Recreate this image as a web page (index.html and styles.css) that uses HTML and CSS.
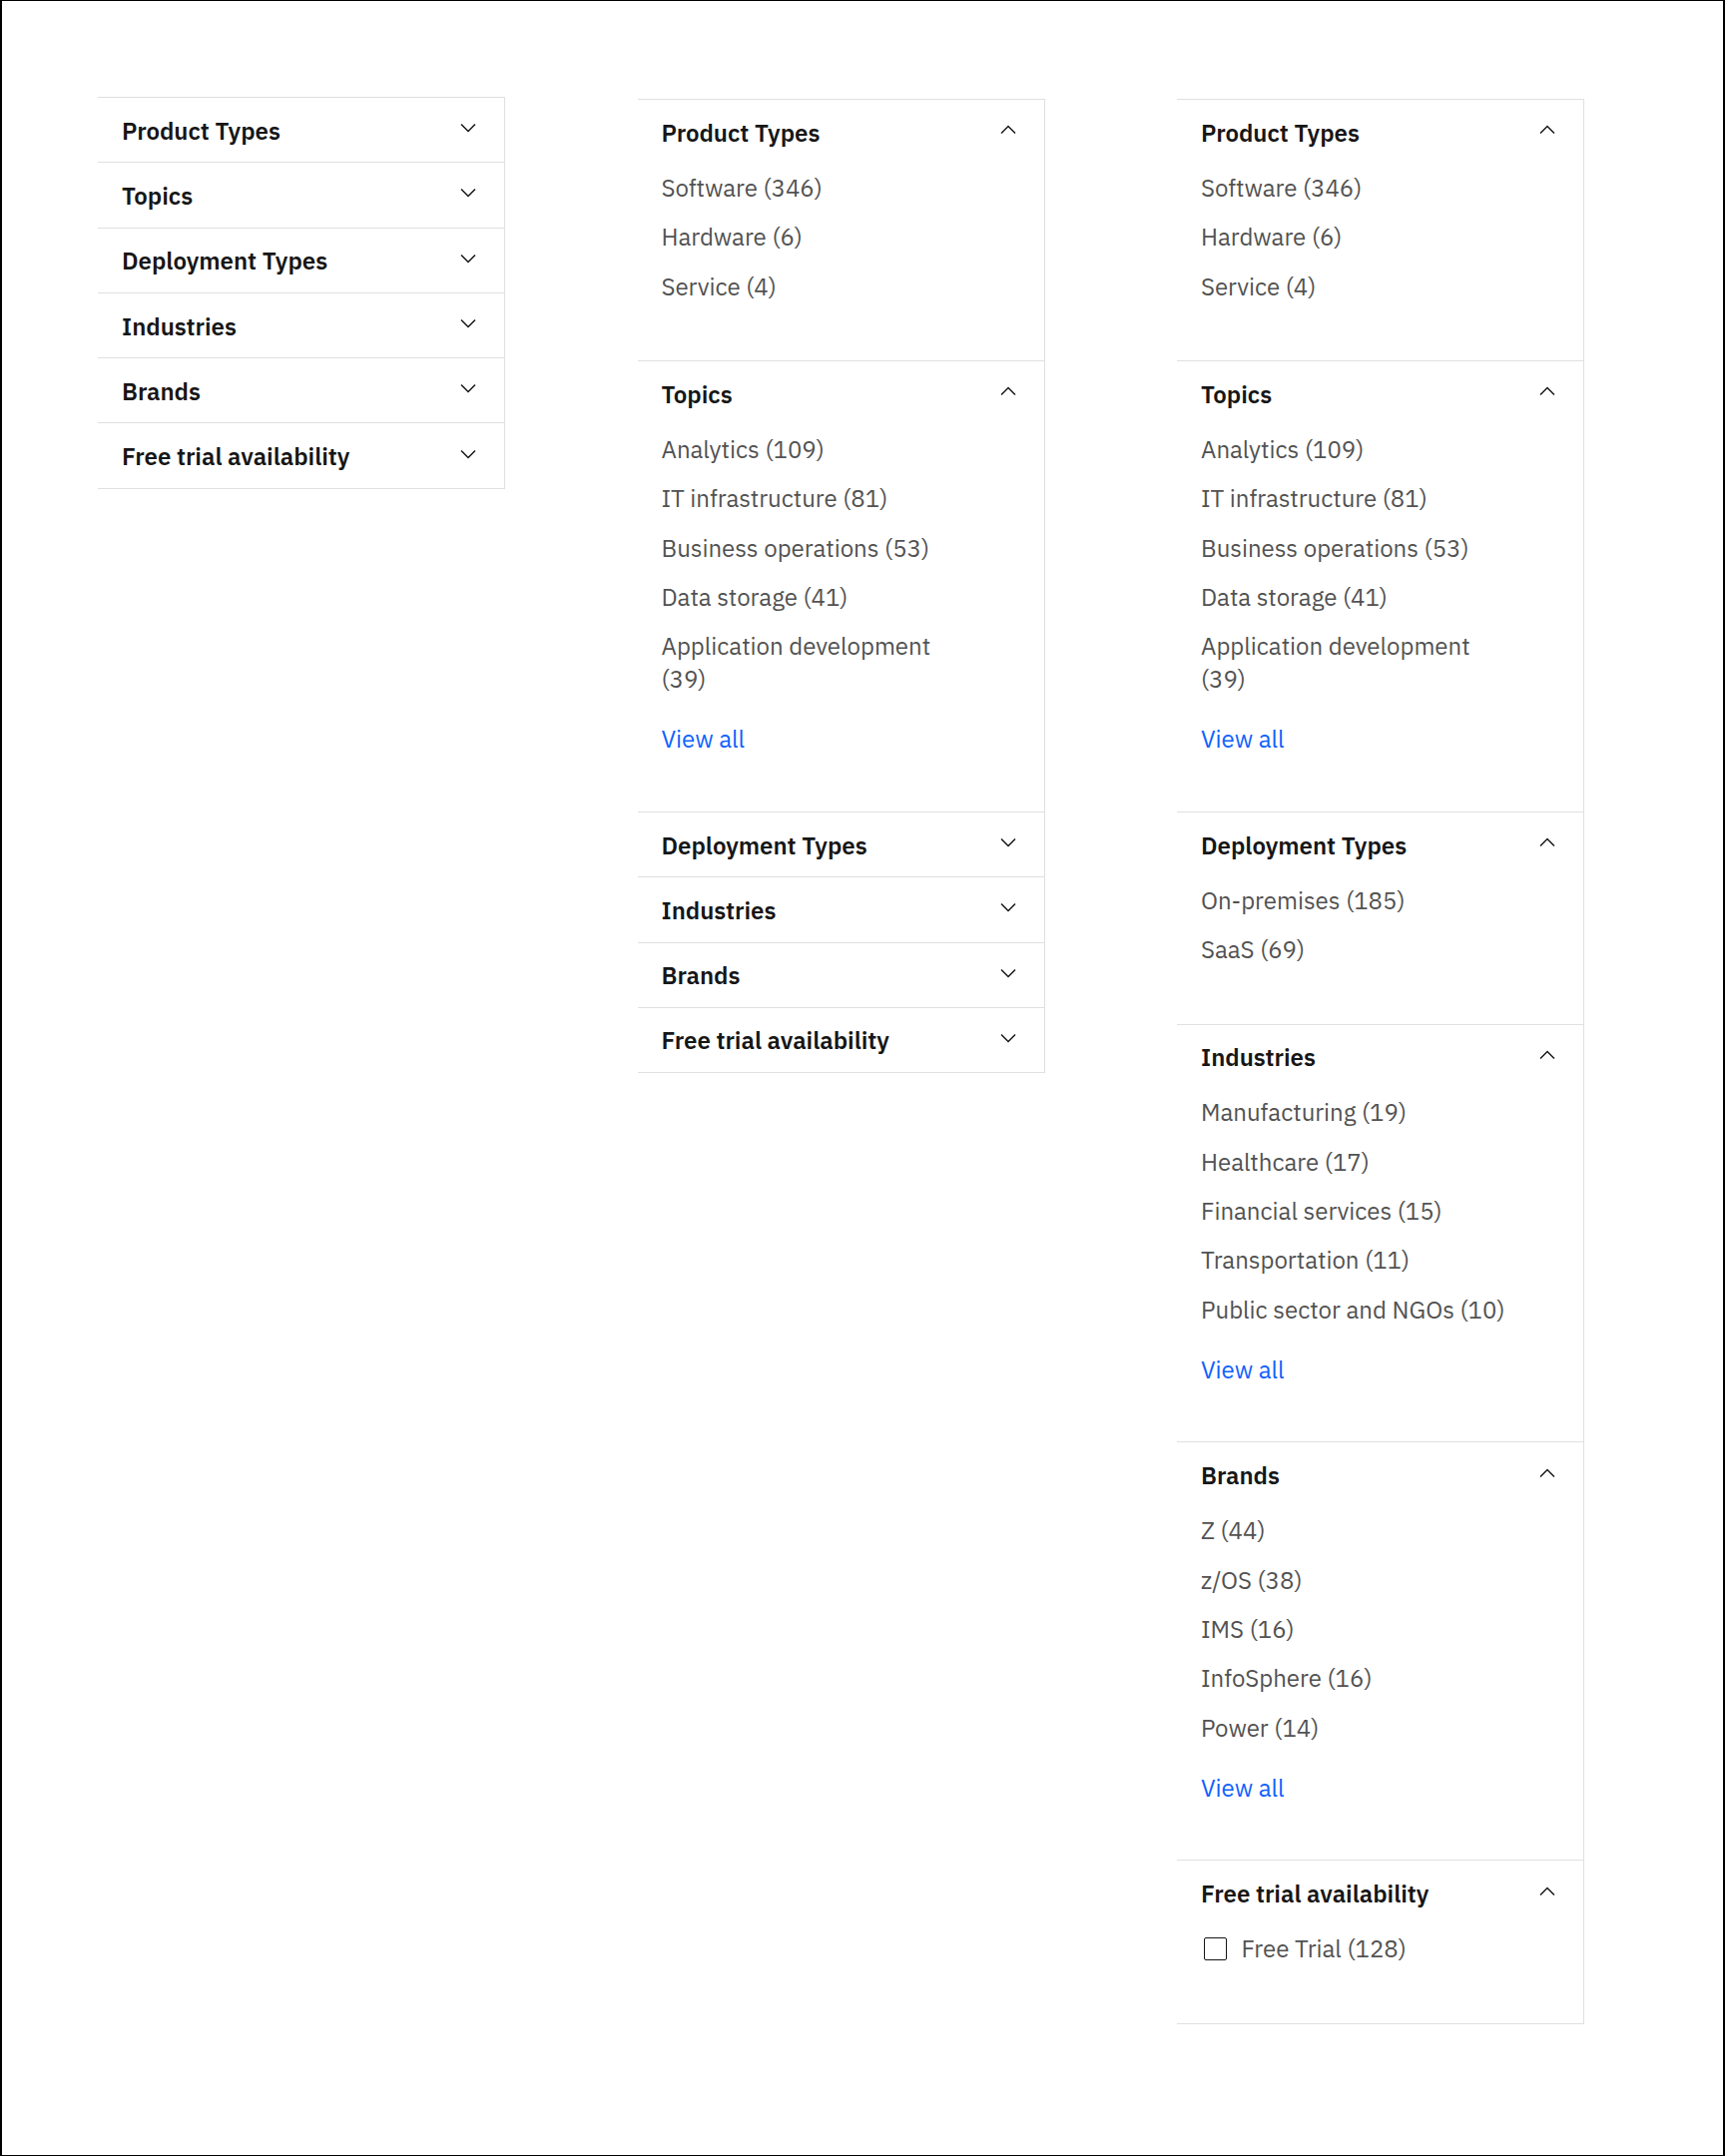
FILE: index.html
```html
<!DOCTYPE html>
<html lang="en">
<head>
<meta charset="utf-8">
<title>Filters</title>
<link rel="stylesheet" href="styles.css">
</head>
<body>
<div class="page">
  <div class="columns">

    <!-- Column 1: all collapsed -->
    <div class="accordion accordion--raised">
      <div class="acc-item">
        <button class="acc-heading"><span class="acc-title">Product Types</span><svg class="chev" viewBox="0 0 16 16"><path d="M8 11L3 6 3.7 5.3 8 9.6 12.3 5.3 13 6z"/></svg></button>
      </div>
      <div class="acc-item">
        <button class="acc-heading"><span class="acc-title">Topics</span><svg class="chev" viewBox="0 0 16 16"><path d="M8 11L3 6 3.7 5.3 8 9.6 12.3 5.3 13 6z"/></svg></button>
      </div>
      <div class="acc-item">
        <button class="acc-heading"><span class="acc-title">Deployment Types</span><svg class="chev" viewBox="0 0 16 16"><path d="M8 11L3 6 3.7 5.3 8 9.6 12.3 5.3 13 6z"/></svg></button>
      </div>
      <div class="acc-item">
        <button class="acc-heading"><span class="acc-title">Industries</span><svg class="chev" viewBox="0 0 16 16"><path d="M8 11L3 6 3.7 5.3 8 9.6 12.3 5.3 13 6z"/></svg></button>
      </div>
      <div class="acc-item">
        <button class="acc-heading"><span class="acc-title">Brands</span><svg class="chev" viewBox="0 0 16 16"><path d="M8 11L3 6 3.7 5.3 8 9.6 12.3 5.3 13 6z"/></svg></button>
      </div>
      <div class="acc-item">
        <button class="acc-heading"><span class="acc-title">Free trial availability</span><svg class="chev" viewBox="0 0 16 16"><path d="M8 11L3 6 3.7 5.3 8 9.6 12.3 5.3 13 6z"/></svg></button>
      </div>
    </div>

    <!-- Column 2: first two expanded -->
    <div class="accordion">
      <div class="acc-item">
        <button class="acc-heading"><span class="acc-title">Product Types</span><svg class="chev" viewBox="0 0 16 16"><path d="M8 5L13 10 12.3 10.7 8 6.4 3.7 10.7 3 10z"/></svg></button>
        <div class="acc-content">
          <ul class="opt-list">
            <li class="opt">Software (346)</li>
            <li class="opt">Hardware (6)</li>
            <li class="opt">Service (4)</li>
          </ul>
        </div>
      </div>
      <div class="acc-item">
        <button class="acc-heading"><span class="acc-title">Topics</span><svg class="chev" viewBox="0 0 16 16"><path d="M8 5L13 10 12.3 10.7 8 6.4 3.7 10.7 3 10z"/></svg></button>
        <div class="acc-content">
          <ul class="opt-list">
            <li class="opt">Analytics (109)</li>
            <li class="opt">IT infrastructure (81)</li>
            <li class="opt">Business operations (53)</li>
            <li class="opt">Data storage (41)</li>
            <li class="opt">Application development (39)</li>
          </ul>
          <a class="view-all" href="#">View all</a>
        </div>
      </div>
      <div class="acc-item">
        <button class="acc-heading"><span class="acc-title">Deployment Types</span><svg class="chev" viewBox="0 0 16 16"><path d="M8 11L3 6 3.7 5.3 8 9.6 12.3 5.3 13 6z"/></svg></button>
      </div>
      <div class="acc-item">
        <button class="acc-heading"><span class="acc-title">Industries</span><svg class="chev" viewBox="0 0 16 16"><path d="M8 11L3 6 3.7 5.3 8 9.6 12.3 5.3 13 6z"/></svg></button>
      </div>
      <div class="acc-item">
        <button class="acc-heading"><span class="acc-title">Brands</span><svg class="chev" viewBox="0 0 16 16"><path d="M8 11L3 6 3.7 5.3 8 9.6 12.3 5.3 13 6z"/></svg></button>
      </div>
      <div class="acc-item">
        <button class="acc-heading"><span class="acc-title">Free trial availability</span><svg class="chev" viewBox="0 0 16 16"><path d="M8 11L3 6 3.7 5.3 8 9.6 12.3 5.3 13 6z"/></svg></button>
      </div>
    </div>

    <!-- Column 3: all expanded -->
    <div class="accordion">
      <div class="acc-item">
        <button class="acc-heading"><span class="acc-title">Product Types</span><svg class="chev" viewBox="0 0 16 16"><path d="M8 5L13 10 12.3 10.7 8 6.4 3.7 10.7 3 10z"/></svg></button>
        <div class="acc-content">
          <ul class="opt-list">
            <li class="opt">Software (346)</li>
            <li class="opt">Hardware (6)</li>
            <li class="opt">Service (4)</li>
          </ul>
        </div>
      </div>
      <div class="acc-item">
        <button class="acc-heading"><span class="acc-title">Topics</span><svg class="chev" viewBox="0 0 16 16"><path d="M8 5L13 10 12.3 10.7 8 6.4 3.7 10.7 3 10z"/></svg></button>
        <div class="acc-content">
          <ul class="opt-list">
            <li class="opt">Analytics (109)</li>
            <li class="opt">IT infrastructure (81)</li>
            <li class="opt">Business operations (53)</li>
            <li class="opt">Data storage (41)</li>
            <li class="opt">Application development (39)</li>
          </ul>
          <a class="view-all" href="#">View all</a>
        </div>
      </div>
      <div class="acc-item">
        <button class="acc-heading"><span class="acc-title">Deployment Types</span><svg class="chev" viewBox="0 0 16 16"><path d="M8 5L13 10 12.3 10.7 8 6.4 3.7 10.7 3 10z"/></svg></button>
        <div class="acc-content">
          <ul class="opt-list">
            <li class="opt">On-premises (185)</li>
            <li class="opt">SaaS (69)</li>
          </ul>
        </div>
      </div>
      <div class="acc-item">
        <button class="acc-heading"><span class="acc-title">Industries</span><svg class="chev" viewBox="0 0 16 16"><path d="M8 5L13 10 12.3 10.7 8 6.4 3.7 10.7 3 10z"/></svg></button>
        <div class="acc-content">
          <ul class="opt-list">
            <li class="opt">Manufacturing (19)</li>
            <li class="opt">Healthcare (17)</li>
            <li class="opt">Financial services (15)</li>
            <li class="opt">Transportation (11)</li>
            <li class="opt">Public sector and NGOs (10)</li>
          </ul>
          <a class="view-all" href="#">View all</a>
        </div>
      </div>
      <div class="acc-item">
        <button class="acc-heading"><span class="acc-title">Brands</span><svg class="chev" viewBox="0 0 16 16"><path d="M8 5L13 10 12.3 10.7 8 6.4 3.7 10.7 3 10z"/></svg></button>
        <div class="acc-content">
          <ul class="opt-list">
            <li class="opt">Z (44)</li>
            <li class="opt">z/OS (38)</li>
            <li class="opt">IMS (16)</li>
            <li class="opt">InfoSphere (16)</li>
            <li class="opt">Power (14)</li>
          </ul>
          <a class="view-all" href="#">View all</a>
        </div>
      </div>
      <div class="acc-item">
        <button class="acc-heading"><span class="acc-title">Free trial availability</span><svg class="chev" viewBox="0 0 16 16"><path d="M8 5L13 10 12.3 10.7 8 6.4 3.7 10.7 3 10z"/></svg></button>
        <div class="acc-content">
          <ul class="opt-list">
            <li class="opt opt--check"><span class="checkbox"></span><span>Free Trial (128)</span></li>
          </ul>
        </div>
      </div>
    </div>

  </div>
</div>
</body>
</html>
```

FILE: styles.css
```css
html, body {
  margin: 0;
  padding: 0;
  background: #ffffff;
}

body {
  font-family: "IBM Plex Sans", Roboto, "Liberation Sans", Arial, sans-serif;
  color: #161616;
}

.page {
  box-sizing: border-box;
  width: 1728px;
  height: 2160px;
  border-style: solid;
  border-color: #000000;
  border-width: 1px 2px;
  padding: 98.3px 0 0 96px;
}

.columns {
  display: grid;
  grid-template-columns: repeat(3, 408px);
  column-gap: 132.5px;
  align-items: start;
}

.accordion {
  border-right: 1px solid #e0e0e0;
  border-bottom: 1px solid #e0e0e0;
}

.accordion--raised {
  margin-top: -2.3px;
}

.acc-item {
  border-top: 1px solid #e0e0e0;
}

.acc-heading {
  display: flex;
  align-items: center;
  justify-content: space-between;
  box-sizing: border-box;
  width: 100%;
  height: 64.3px;
  margin: 0;
  padding: 1px 24px 0 24px;
  border: 0;
  background: transparent;
  font: inherit;
  cursor: pointer;
  text-align: left;
}

.acc-title {
  font-size: 24px;
  line-height: 36px;
  font-weight: 600;
  color: #161616;
}

.chev {
  width: 24px;
  height: 24px;
  flex: none;
  fill: #161616;
  margin-bottom: 5px;
}

.acc-content {
  padding: 7.6px 72px 57.6px 24px;
}

.opt-list {
  list-style: none;
  margin: 0;
  padding: 0;
  display: flex;
  flex-direction: column;
  gap: 16.5px;
}

.opt {
  font-size: 24px;
  line-height: 32.8px;
  color: #525252;
}

.opt--check {
  display: flex;
  align-items: center;
}

.checkbox {
  box-sizing: border-box;
  width: 23px;
  height: 23px;
  flex: none;
  margin-left: 3.4px;
  margin-right: 14px;
  border: 1.5px solid #161616;
  border-radius: 2px;
}

.view-all {
  display: block;
  margin-top: 27.2px;
  margin-bottom: -1.5px;
  font-size: 24px;
  line-height: 32.8px;
  color: #0f62fe;
  text-decoration: none;
}
```
